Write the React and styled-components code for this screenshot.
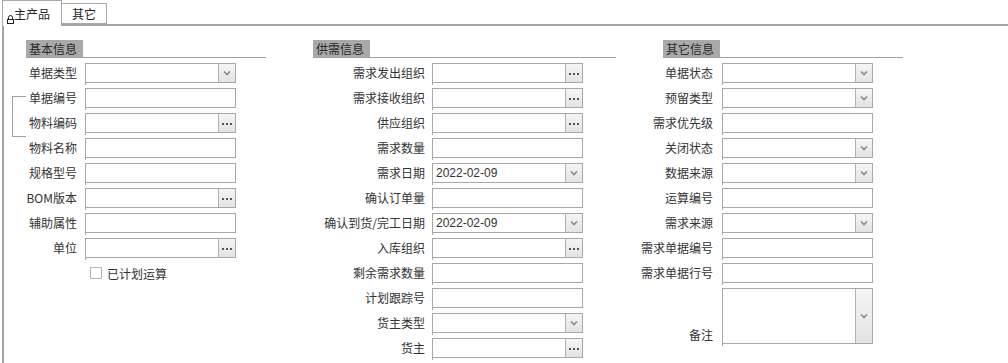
import React from "react";
import styled, { createGlobalStyle } from "styled-components";

const GlobalStyle = createGlobalStyle`
  html, body {
    margin: 0;
    padding: 0;
    background: #fff;
    overflow: hidden;
  }
  body {
    font-family: "Noto Sans CJK SC", "Noto Sans", sans-serif;
    font-size: 12px;
    color: #333;
  }
`;

const TabBar = styled.div`
  display: flex;
  align-items: flex-end;
  height: 24px;
  padding-left: 2px;
`;

const Tab = styled.div`
  position: relative;
  box-sizing: border-box;
  height: ${(p) => (p.active ? "26px" : "21px")};
  margin-bottom: ${(p) => (p.active ? "-2px" : "0")};
  padding: ${(p) => (p.active ? "3px 11px 0 11px" : "0 10px")};
  border: 1px solid #a8a8a8;
  border-bottom: ${(p) => (p.active ? "none" : "1px solid #a8a8a8")};
  border-left: ${(p) => (p.active ? "1px solid #a8a8a8" : "none")};
  background: #fff;
  z-index: ${(p) => (p.active ? 2 : 1)};
  line-height: 20px;
  color: #222;
  white-space: nowrap;
`;

const Lock = styled.svg`
  position: absolute;
  left: 4px;
  top: 14px;
`;

const Panel = styled.div`
  box-sizing: border-box;
  margin-left: 2px;
  border-top: 2px solid #a3a3a3;
  border-left: 2px solid #a3a3a3;
  height: 339px;
  overflow: hidden;
  padding: 14px 0 0 22px;
  display: flex;
  gap: 47px;
`;

const Column = styled.div`
  position: relative;
  width: ${(p) => p.width}px;
  flex-shrink: 0;
`;

const SectionHead = styled.div`
  border-bottom: 1px solid #a0a0a0;
  margin-bottom: 5px;
`;

const SectionTitle = styled.span`
  display: inline-block;
  height: 17px;
  line-height: 17px;
  padding: 0 6px 0 3px;
  background: #a9a9a9;
  color: #2a2a2a;
  vertical-align: bottom;
`;

const Row = styled.div`
  display: flex;
  align-items: ${(p) => (p.tall ? "flex-end" : "center")};
  height: ${(p) => (p.tall ? 56 : 20)}px;
  margin-bottom: 5px;
`;

const Label = styled.div`
  width: ${(p) => p.width}px;
  margin-right: ${(p) => p.gap}px;
  flex-shrink: 0;
  display: flex;
  justify-content: flex-end;
  white-space: nowrap;
  line-height: 18px;
  color: #333;
`;

const Box = styled.div`
  position: relative;
  box-sizing: border-box;
  width: 151px;
  height: 100%;
  border: 1px solid #a8a8a8;
  background: #fff;
  display: flex;
  &::after {
    content: "";
    position: absolute;
    left: -1px;
    bottom: -3px;
    width: 1px;
    height: 3px;
    background: #a8a8a8;
  }
`;

const Value = styled.div`
  flex: 1;
  padding-left: 3px;
  font-family: "Liberation Sans", Arial, sans-serif;
  font-size: 12px;
  line-height: 18px;
  color: #333;
`;

const SideButton = styled.div`
  width: 16px;
  border-left: 1px solid #b0b0b0;
  background: linear-gradient(#f5f5f5, #e3e3e3);
  display: flex;
  align-items: center;
  justify-content: center;
`;

const Dots = styled.div`
  display: flex;
  gap: 2px;
  margin-top: 1px;
  span {
    width: 2px;
    height: 2px;
    background: #555;
  }
`;

const CheckRow = styled.label`
  display: flex;
  align-items: center;
  height: 20px;
  padding-left: 64px;
  gap: 5px;
  color: #333;
`;

const CheckBox = styled.span`
  box-sizing: border-box;
  width: 12px;
  height: 12px;
  border: 1px solid #b4b4b4;
  background: #fff;
`;

const Bracket = styled.div`
  position: absolute;
  left: -14px;
  top: 56px;
  width: 14px;
  height: 41px;
  box-sizing: border-box;
  border: 1px solid #a0a0a0;
  border-right: none;
`;

const Chevron = () => (
  <svg width="8" height="5" viewBox="0 0 8 5">
    <path d="M1 0.5 L4 3.5 L7 0.5" fill="none" stroke="#8a8a8a" strokeWidth="1.6" />
  </svg>
);

function Field({ label, type = "text", value, lw, gap }) {
  const tall = type === "textarea";
  return (
    <Row tall={tall}>
      <Label width={lw} gap={gap}>{label}</Label>
      <Box>
        <Value>{value}</Value>
        {(type === "select" || type === "textarea") && (
          <SideButton>
            <Chevron />
          </SideButton>
        )}
        {type === "lookup" && (
          <SideButton>
            <Dots>
              <span />
              <span />
              <span />
            </Dots>
          </SideButton>
        )}
      </Box>
    </Row>
  );
}

const basic = [
  { label: "单据类型", type: "select" },
  { label: "单据编号" },
  { label: "物料编码", type: "lookup" },
  { label: "物料名称" },
  { label: "规格型号" },
  { label: "BOM版本", type: "lookup" },
  { label: "辅助属性" },
  { label: "单位", type: "lookup" },
];

const supply = [
  { label: "需求发出组织", type: "lookup" },
  { label: "需求接收组织", type: "lookup" },
  { label: "供应组织", type: "lookup" },
  { label: "需求数量" },
  { label: "需求日期", type: "select", value: "2022-02-09" },
  { label: "确认订单量" },
  { label: "确认到货/完工日期", type: "select", value: "2022-02-09" },
  { label: "入库组织", type: "lookup" },
  { label: "剩余需求数量" },
  { label: "计划跟踪号" },
  { label: "货主类型", type: "select" },
  { label: "货主", type: "lookup" },
];

const other = [
  { label: "单据状态", type: "select" },
  { label: "预留类型", type: "select" },
  { label: "需求优先级" },
  { label: "关闭状态", type: "select" },
  { label: "数据来源", type: "select" },
  { label: "运算编号" },
  { label: "需求来源", type: "select" },
  { label: "需求单据编号" },
  { label: "需求单据行号" },
  { label: "备注", type: "textarea" },
];

export default function App() {
  return (
    <>
      <GlobalStyle />
      <TabBar>
        <Tab active>
          主产品
          <Lock width="7" height="9" viewBox="0 0 7 9">
            <path d="M1.5 4 V2.5 A2 2 0 0 1 5.5 2.5 V4" fill="none" stroke="#222" strokeWidth="1" />
            <rect x="0.5" y="4.5" width="6" height="4" fill="#fff" stroke="#222" strokeWidth="1" />
          </Lock>
        </Tab>
        <Tab>其它</Tab>
      </TabBar>
      <Panel>
        <Column width={240}>
          <SectionHead>
            <SectionTitle>基本信息</SectionTitle>
          </SectionHead>
          <Bracket />
          {basic.map((f) => (
            <Field key={f.label} {...f} lw={51} gap={8} />
          ))}
          <CheckRow>
            <CheckBox />
            已计划运算
          </CheckRow>
        </Column>
        <Column width={303}>
          <SectionHead>
            <SectionTitle>供需信息</SectionTitle>
          </SectionHead>
          {supply.map((f) => (
            <Field key={f.label} {...f} lw={112} gap={7} />
          ))}
        </Column>
        <Column width={240}>
          <SectionHead>
            <SectionTitle>其它信息</SectionTitle>
          </SectionHead>
          {other.map((f) => (
            <Field key={f.label} {...f} lw={50} gap={9} />
          ))}
        </Column>
      </Panel>
    </>
  );
}
